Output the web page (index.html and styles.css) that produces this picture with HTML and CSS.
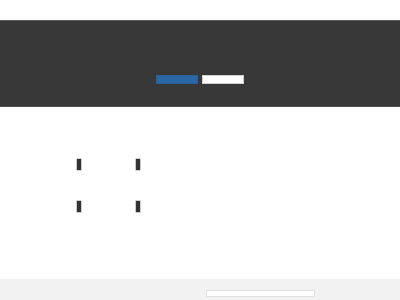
FILE: index.html
```html
<!DOCTYPE html>
<html>
<head>
<meta charset="utf-8">
<link rel="stylesheet" href="styles.css">
</head>
<body>
<div class="topbar"></div>
<section class="hero">
  <div class="actions">
    <span class="btn btn-primary"></span>
    <span class="btn btn-light"></span>
  </div>
</section>
<main class="content">
  <div class="marks">
    <span class="mark"></span>
    <span class="mark"></span>
    <span class="mark"></span>
    <span class="mark"></span>
  </div>
</main>
<footer class="footer">
  <span class="field"></span>
</footer>
</body>
</html>
```
FILE: styles.css
```css
html, body {
  margin: 0;
  padding: 0;
  background: #ffffff;
  font-family: "Liberation Sans", Arial, sans-serif;
}
body {
  width: 400px;
  height: 300px;
  overflow: hidden;
  display: flex;
  flex-direction: column;
}
.topbar {
  height: 20px;
  flex: none;
}
.hero {
  flex: none;
  height: 85px;
  background: #383838;
  border-top: 1px solid #5c5c5c;
  border-bottom: 1px solid #4e4e4e;
  display: flex;
  justify-content: center;
  padding-top: 54px;
  box-sizing: content-box;
  height: 31px;
}
.actions {
  display: flex;
  gap: 4px;
  height: 9px;
}
.btn {
  display: block;
  width: 42px;
  height: 9px;
  box-sizing: border-box;
}
.btn-primary {
  background: #2b66a6;
  border: 1px solid #2a5f99;
}
.btn-light {
  background: #ffffff;
  border: 1px solid #d0d0d0;
}
.content {
  flex: 1;
  padding: 52px 0 0 77px;
}
.marks {
  display: grid;
  grid-template-columns: 4px 4px;
  grid-template-rows: 11px 11px;
  column-gap: 55px;
  row-gap: 31px;
}
.mark {
  display: block;
  background: #333333;
  box-shadow: 0 0 0 0.5px #999;
}
.footer {
  flex: none;
  height: 21px;
  background: #f2f2f2;
  padding: 11px 0 0 206px;
  box-sizing: border-box;
}
.field {
  display: block;
  width: 109px;
  height: 7px;
  background: #ffffff;
  border: 1px solid #e2e2e2;
  box-sizing: border-box;
}
```
